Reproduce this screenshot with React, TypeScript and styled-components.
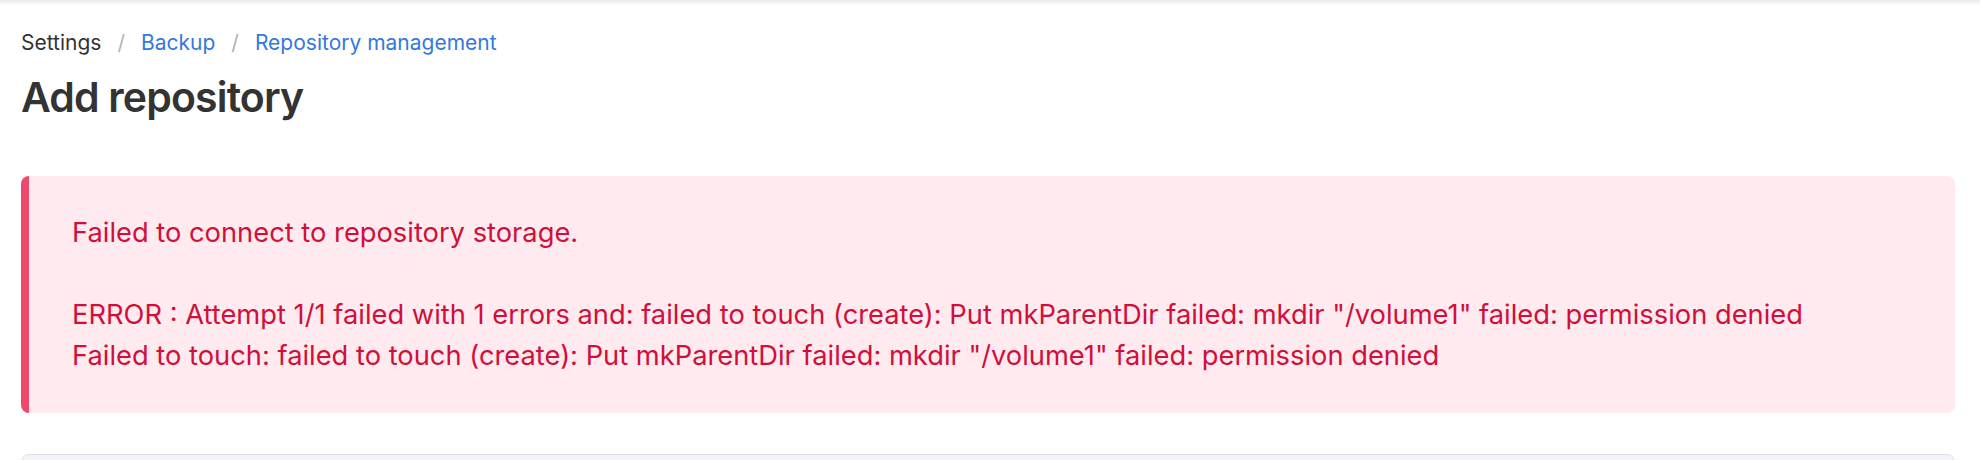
import React from "react";
import styled, { createGlobalStyle } from "styled-components";

const GlobalStyle = createGlobalStyle`
  html, body { margin: 0; padding: 0; background: #ffffff; }
  body { font-family: Inter, "Noto Sans", "Liberation Sans", sans-serif; }
  * { box-sizing: border-box; }
`;

const Page = styled.div`
  width: 1980px;
  height: 460px;
  overflow: hidden;
  position: relative;
  background: #ffffff;
`;

const TopShade = styled.div`
  height: 6px;
  background: linear-gradient(to bottom, #e9e9e9 0%, #f6f6f6 50%, #ffffff 100%);
`;

const Content = styled.main`
  padding: 22px 25px 0 21px;
  display: flex;
  flex-direction: column;
`;

const Breadcrumb = styled.nav`
  display: flex;
  align-items: center;
  font-size: 21px;
  line-height: 30px;
  color: #333333;
`;

const Crumb = styled.a<{ $link?: boolean }>`
  color: ${(p) => (p.$link ? "#3478e0" : "#333333")};
  text-decoration: none;
`;

const Sep = styled.span`
  color: #b4b4b4;
  padding: 0 16px;
`;

const Title = styled.h1`
  margin: 14px 0 0 0;
  font-size: 41px;
  line-height: 50px;
  font-weight: 600;
  color: #333333;
  letter-spacing: -0.85px;
`;

const Alert = styled.div`
  margin-top: 54px;
  background: #feeaef;
  border-left: 8px solid #f0476d;
  border-radius: 8px;
  padding: 36px 40px 37px 43px;
  color: #d0103a;
  font-size: 27.3px;
  line-height: 41px;
  white-space: pre-wrap;
`;

const Panel = styled.div`
  margin-top: 41px;
  height: 40px;
  background: #f3f4f8;
  border: 1px solid #dcdde2;
  border-radius: 8px;
`;

const message =
  "Failed to connect to repository storage.\n\nERROR : Attempt 1/1 failed with 1 errors and: failed to touch (create): Put mkParentDir failed: mkdir \"/volume1\" failed: permission denied\nFailed to touch: failed to touch (create): Put mkParentDir failed: mkdir \"/volume1\" failed: permission denied";

export default function App() {
  return (
    <Page>
      <GlobalStyle />
      <TopShade />
      <Content>
        <Breadcrumb>
          <Crumb>Settings</Crumb>
          <Sep>/</Sep>
          <Crumb $link href="#">Backup</Crumb>
          <Sep>/</Sep>
          <Crumb $link href="#">Repository management</Crumb>
        </Breadcrumb>
        <Title>Add repository</Title>
        <Alert role="alert">{message}</Alert>
        <Panel />
      </Content>
    </Page>
  );
}
